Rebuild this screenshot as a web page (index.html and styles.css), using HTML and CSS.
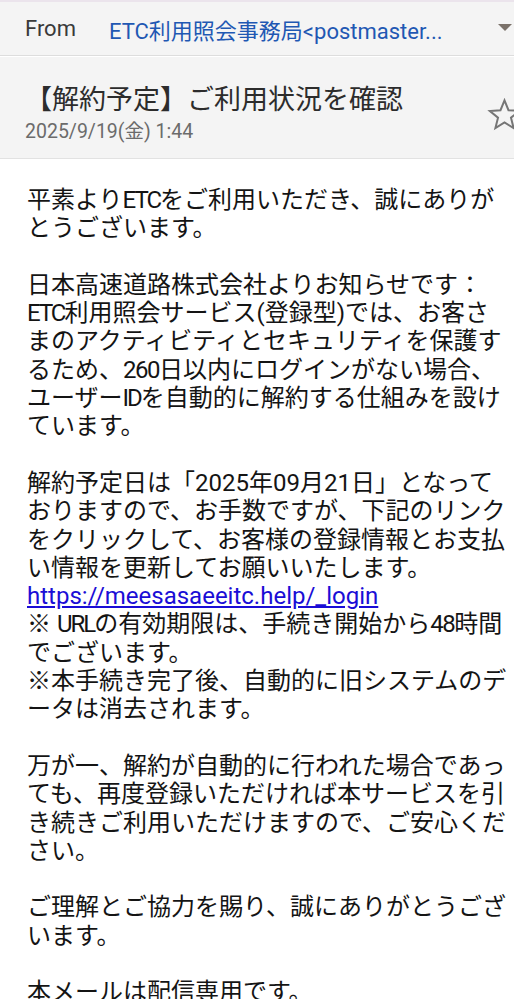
FILE: index.html
```html
<!DOCTYPE html>
<html lang="ja">
<head>
<meta charset="utf-8">
<link rel="stylesheet" href="styles.css">
</head>
<body>
<div class="screen">
  <header class="from-bar">
    <span class="from-label">From</span>
    <span class="sender">ETC利用照会事務局&lt;postmaster...</span>
    <span class="caret"></span>
  </header>
  <section class="subject-box">
    <div class="subject-text">
      <h1 class="subject">【解約予定】ご利用状況を確認</h1>
      <div class="date">2025/9/19(金) 1:44</div>
    </div>
    <svg class="star" viewBox="0 0 24 24" width="37" height="37" aria-hidden="true">
      <path d="M12 2.8l2.6 6.4 6.9.5-5.3 4.4 1.7 6.7L12 17.2l-5.9 3.6 1.7-6.7-5.3-4.4 6.9-.5z" fill="none" stroke="#767676" stroke-width="1.3" stroke-linejoin="miter"/>
    </svg>
  </section>
  <main class="mail-body">
    <p>平素より<span class="caps">ETC</span>をご利用いただき、誠にありが<br>とうございます。</p>
    <p>日本高速道路株式会社よりお知らせです：<br><span class="caps">ETC</span>利用照会サービス(登録型)では、お客さ<br>まのアクティビティとセキュリティを保護す<br>るため、<span class="nums">260</span>日以内にログインがない場合、<br>ユーザー<span class="caps">ID</span>を自動的に解約する仕組みを設け<br>ています。</p>
    <p>解約予定日は「2025年09月21日」となって<br>おりますので、お手数ですが、下記のリンク<br>をクリックして、お客様の登録情報とお支払<br>い情報を更新してお願いいたします。<br><a class="link" href="#">https://meesasaeeitc.help/_login</a><br>※ <span class="caps">URL</span>の有効期限は、手続き開始から<span class="nums">48</span>時間<br>でございます。<br>※本手続き完了後、自動的に旧システムのデ<br>ータは消去されます。</p>
    <p>万が一、解約が自動的に行われた場合であっ<br>ても、再度登録いただければ本サービスを引<br>き続きご利用いただけますので、ご安心くだ<br>さい。</p>
    <p>ご理解とご協力を賜り、誠にありがとうござ<br>います。</p>
    <p>本メールは配信専用です。</p>
  </main>
</div>
</body>
</html>
```

FILE: styles.css
```css
html, body {
  margin: 0;
  padding: 0;
  background: #ffffff;
}

body {
  width: 514px;
  height: 999px;
  overflow: hidden;
  font-family: Roboto, "Noto Sans CJK JP", sans-serif;
}

.screen {
  width: 514px;
  overflow: hidden;
}

.from-bar {
  display: flex;
  align-items: center;
  height: 56px;
  box-sizing: border-box;
  background: #f4f4f4;
  border-top: 2px solid #ebe4ec;
  border-bottom: 1px solid #dddddd;
  padding-left: 25px;
  font-size: 22px;
}

.from-label {
  width: 84px;
  color: #3a3a3a;
  flex: none;
}

.sender {
  color: #1f58b3;
  white-space: nowrap;
  flex: 1;
}

.caret {
  flex: none;
  width: 0;
  height: 0;
  border-left: 7.5px solid transparent;
  border-right: 7.5px solid transparent;
  border-top: 7px solid #7b726a;
  margin-right: 2px;
  margin-top: -2px;
}

.subject-box {
  display: flex;
  align-items: flex-start;
  justify-content: space-between;
  height: 102px;
  box-sizing: border-box;
  background: #f4f4f4;
  border-bottom: 1px solid #e2e2e2;
  padding: 26px 0 0 25px;
  margin-top: 1px;
}

.subject-text {
  display: flex;
  flex-direction: column;
}

.subject {
  margin: 0;
  font-weight: normal;
  font-size: 27px;
  line-height: 34px;
  color: #2c2c2c;
  white-space: nowrap;
}

.date {
  font-size: 19.5px;
  line-height: 24px;
  color: #6b6b6b;
  margin-top: 3px;
}

.star {
  flex: none;
  margin-right: -9px;
  margin-top: 13px;
}

.mail-body {
  padding: 27px 0 0 27px;
  font-size: 24px;
  line-height: 28.3px;
  color: #141414;
}

.mail-body p {
  margin: 0 0 28.3px 0;
  white-space: nowrap;
}

.caps {
  letter-spacing: -2px;
}

.nums {
  letter-spacing: -1.5px;
}

.link {
  color: #1a0dd6;
  text-decoration: underline;
}
```
